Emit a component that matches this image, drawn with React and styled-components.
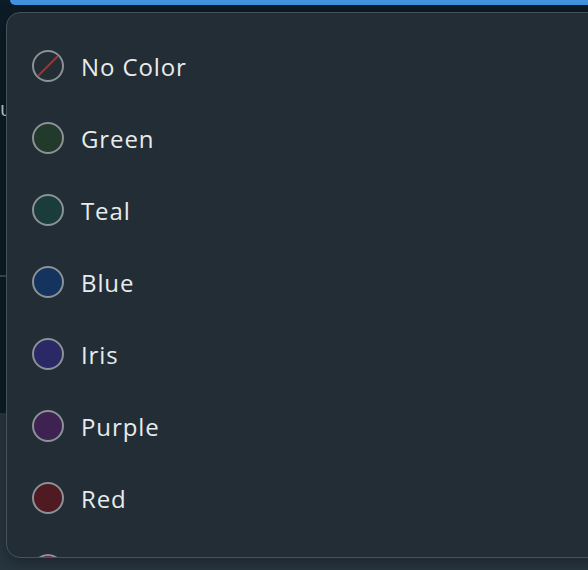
import styled, { createGlobalStyle } from "styled-components"

const GlobalStyle = createGlobalStyle`
    html, body {
        margin: 0;
        padding: 0;
        background: #0d1d27;
    }
    * {
        box-sizing: border-box;
    }
`

const Page = styled.div`
    position: relative;
    width: 588px;
    height: 570px;
    overflow: hidden;
    display: flex;
    flex-direction: column;
    font-family: "Open Sans", "Liberation Sans", sans-serif;
`
const TopButton = styled.div`
    height: 5px;
    margin-left: 10px;
    background: #4293e2;
    border-bottom-left-radius: 10px;
    flex-shrink: 0;
`
const Panel = styled.div`
    height: 408px;
    display: flex;
    flex-direction: column;
    background: #0c1c26;
`
const PanelLabel = styled.div`
    margin-top: 92px;
    height: 24px;
    color: #c9d0d4;
    font-size: 20px;
    line-height: 24px;
`
const Divider = styled.div`
    margin-top: 154px;
    height: 2px;
    background: #3b4a54;
`
const Lower = styled.div`
    flex: 1;
    background: #283640;
`

const Popover = styled.div`
    position: absolute;
    left: 6px;
    top: 12px;
    width: 620px;
    height: 546px;
    background: #222d36;
    border: 1px solid #46535c;
    border-radius: 14px;
    overflow: hidden;
    box-shadow: 0 4px 16px rgba(0, 0, 0, 0.35);
`
const List = styled.ul`
    list-style: none;
    margin: 0;
    padding: 17px 0 0 25px;
`
const Item = styled.li`
    height: 72px;
    display: flex;
    align-items: center;
    gap: 17px;
    color: #e8ebec;
    font-size: 24px;
    letter-spacing: 0.9px;
    cursor: pointer;
`
const Swatch = styled.span`
    width: 32px;
    height: 32px;
    flex-shrink: 0;
    border-radius: 50%;
    border: 2px solid #8b9195;
    background: ${(p) => p.$color || "transparent"};
    display: flex;
    overflow: hidden;
`

const colors = [
    { name: "No Color", color: null },
    { name: "Green", color: "#213a2c" },
    { name: "Teal", color: "#1a3d3b" },
    { name: "Blue", color: "#14345f" },
    { name: "Iris", color: "#2a2966" },
    { name: "Purple", color: "#3e2352" },
    { name: "Red", color: "#4f1a21" },
    { name: "Magenta", color: "#6e1d45" },
]

function App() {
    return (
        <Page>
            <GlobalStyle />
            <TopButton />
            <Panel>
                <PanelLabel>u</PanelLabel>
                <Divider />
            </Panel>
            <Lower />
            <Popover>
                <List>
                    {colors.map((c) => (
                        <Item key={c.name}>
                            <Swatch $color={c.color}>
                                {!c.color && (
                                    <svg width="28" height="28" viewBox="0 0 28 28">
                                        <line x1="4" y1="24" x2="24" y2="4" stroke="#8e3a3a" strokeWidth="2.2" />
                                    </svg>
                                )}
                            </Swatch>
                            {c.name}
                        </Item>
                    ))}
                </List>
            </Popover>
        </Page>
    )
}

export default App
